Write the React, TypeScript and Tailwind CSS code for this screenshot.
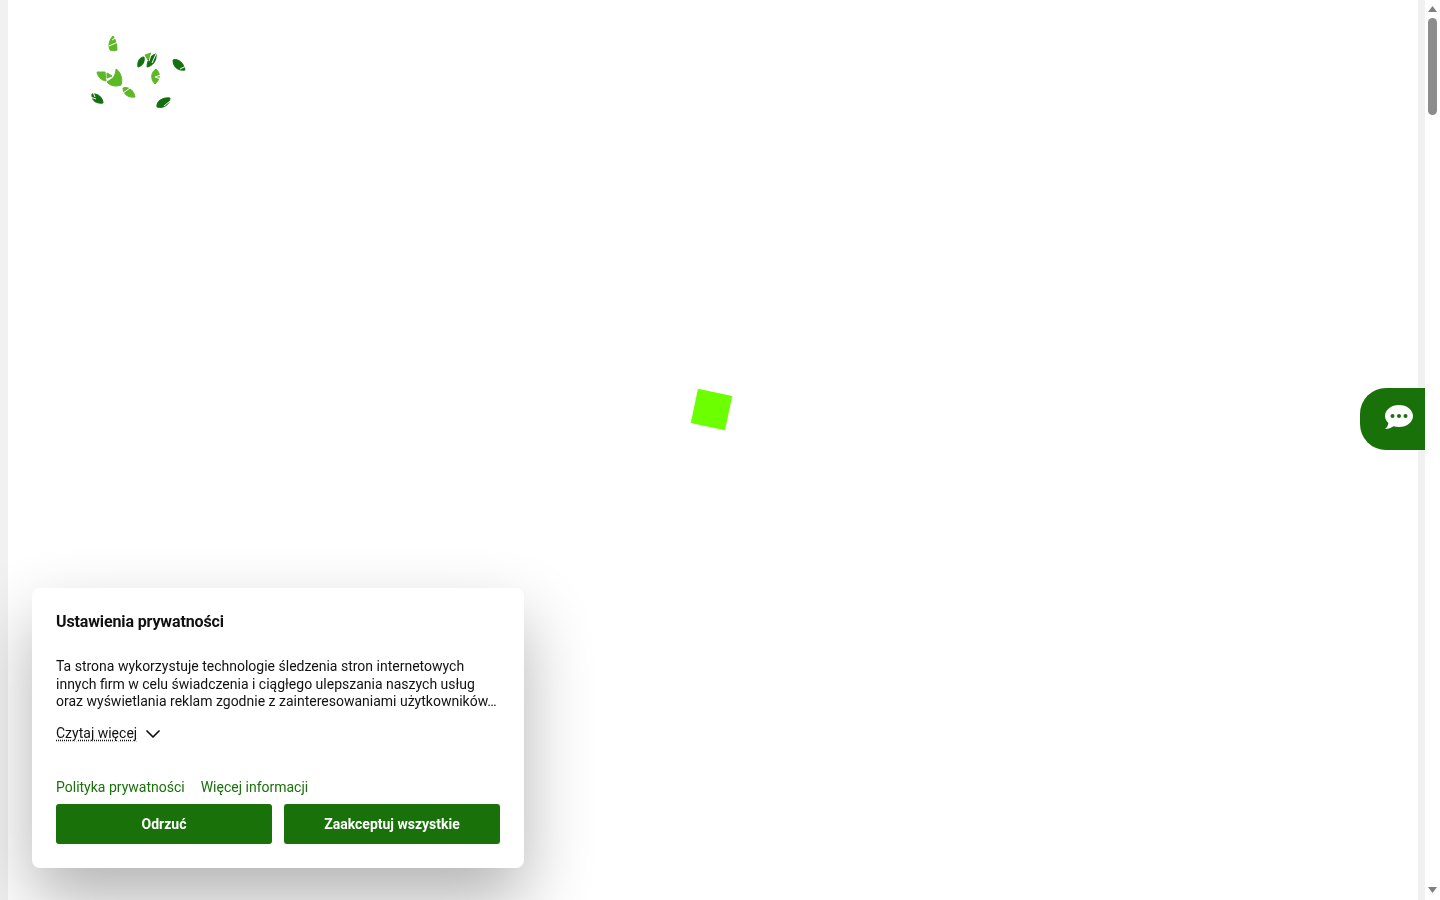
import { ChevronDown } from "lucide-react";

const LIGHT = "#5cb825";
const DARK = "#12700f";

function LeafLogo() {
  return (
    <svg width="115" height="90" viewBox="0 0 115 90" className="block">
      <g fill={LIGHT} stroke={LIGHT} strokeWidth="1" strokeLinejoin="round">
        {/* top leaf */}
        <path d="M33 11 C29 15 28 21 30 25 C33 26 36 26 37 25 C37 20 36 15 33 11 Z" />
        {/* middle leaf */}
        <path d="M76 44 C71 47 70 54 75 59 C80 55 81 48 76 44 Z" />
        {/* cluster */}
        <path d="M17 47 L25 47 L26 56 C21 55 18 52 17 47 Z" />
        <path d="M27 48 L32 51 L27 53 Z" />
        <path d="M36 44 C41 47 43 55 41 60 C36 62 30 61 27 57 L33 53 C35 50 36 47 36 44 Z" />
        {/* lower leaf */}
        <path d="M43 63 C49 61 54 66 55 72 C48 73 43 69 43 63 Z" />
        <path d="M65 30 L68 35 L71 28 Z" />
      </g>
      <g fill={DARK} stroke={DARK} strokeWidth="1" strokeLinejoin="round">
        {/* dark pair */}
        <path d="M58 42 C57 36 60 32 64 32 C65 36 63 41 58 42 Z" />
        <path d="M67 42 C67 35 71 30 76 29 C77 35 73 41 67 42 Z" />
        {/* right leaf */}
        <path d="M93 35 C99 33 104 39 105 45 C99 46 93 43 93 35 Z" />
        {/* bottom left leaf */}
        <path d="M12 69 C18 68 23 73 23 78 C17 79 11 76 12 69 Z" />
        {/* bottom right leaf */}
        <path d="M77 82 C76 76 83 72 90 73 C90 79 84 84 77 82 Z" />
      </g>
      <g stroke="#fff" strokeWidth="1" fill="none">
        <path d="M38 17 L29 21 M32 15 L37 12" />
        <path d="M72 27 L69 36 M76 29 L72 38" />
        <path d="M106 41 L100 44" />
        <path d="M81 50 L75 52 L81 54" />
        <path d="M43 68 L50 63" />
        <path d="M10 72 L16 74 M13 67 L15 72" />
        <path d="M84 81 L90 76" />
      </g>
    </svg>
  );
}

function ChatIcon() {
  return (
    <svg width="28" height="24" viewBox="0 0 28 24" className="block">
      <path
        d="M14 0 C21.700 0 28 4.900 28 11 C28 17.100 21.700 22 14 22 C12 22 10.200 21.700 8.500 21.200 C6.500 22.800 3.500 24 0 24 C2 22.500 3 20.500 3.400 18 C1.300 16 0 13.600 0 11 C0 4.900 6.300 0 14 0 Z"
        fill="#fff"
      />
      <circle cx="7.500" cy="11" r="2" fill="#19710a" />
      <circle cx="14" cy="11" r="2" fill="#19710a" />
      <circle cx="20.500" cy="11" r="2" fill="#19710a" />
    </svg>
  );
}

function Scrollbar() {
  return (
    <div className="w-[15px] shrink-0 h-full bg-white flex flex-col items-center justify-between pt-[6px] pb-[7px]">
      <div className="flex flex-col items-center gap-[6px]">
        <svg width="9" height="6" viewBox="0 0 9 6" className="block">
          <path d="M4.500 0 L9 6 L0 6 Z" fill="#7f7f7f" />
        </svg>
        <div className="w-[9px] h-[97px] rounded-full bg-[#8c8c8c]" />
      </div>
      <svg width="9" height="6" viewBox="0 0 9 6" className="block">
        <path d="M0 0 L9 0 L4.500 6 Z" fill="#7f7f7f" />
      </svg>
    </div>
  );
}

function CookieDialog() {
  return (
    <div className="fixed left-8 bottom-8 w-[492px] h-[280px] bg-white rounded-lg p-6 flex flex-col text-[14px] text-[#111] shadow-[0_32px_68px_rgba(0,0,0,0.3)]">
      <h2 className="text-[16px] leading-[20px] font-bold tracking-[-0.13px] text-[#111]">Ustawienia prywatności</h2>
      <p className="mt-[26px] leading-[17.500px] line-clamp-3">
        Ta strona wykorzystuje technologie śledzenia stron internetowych innych firm w celu świadczenia i ciągłego ulepszania naszych usług oraz wyświetlania reklam zgodnie z zainteresowaniami użytkowników. Wyrażenie zgody jest dobrowolne i może zostać w każdej chwili odwołane.
      </p>
      <div className="mt-[14px] flex items-center gap-1 leading-[17.500px]">
        <span className="underline decoration-dotted underline-offset-2">Czytaj więcej</span>
        <ChevronDown size={24} strokeWidth={1.75} className="-my-1 mt-[-3px]" />
      </div>
      <div className="mt-auto flex gap-4 leading-[17.500px] text-[#19710a] mb-2">
        <a>Polityka prywatności</a>
        <a>Więcej informacji</a>
      </div>
      <div className="flex gap-3">
        <button className="w-[216px] h-10 rounded-[3px] bg-[#19710a] text-white font-bold">Odrzuć</button>
        <button className="flex-1 h-10 rounded-[3px] bg-[#19710a] text-white font-bold">Zaakceptuj wszystkie</button>
      </div>
    </div>
  );
}

export default function App() {
  return (
    <div className="h-screen w-full overflow-hidden flex bg-white font-['Roboto',sans-serif]">
      <div className="w-2 shrink-0 bg-[#f1f1f1]" />
      <main className="flex-1 relative">
        <div className="pl-[72px] pt-[25px]">
          <LeafLogo />
        </div>
        {/* loader */}
        <div className="absolute left-[686px] top-[392px] w-[35px] h-[35px] rotate-[12deg] bg-[#6cff00]" />
      </main>
      <div className="w-[7px] shrink-0 bg-[#f1f1f1]" />
      <Scrollbar />

      <button className="fixed right-[15px] top-[388px] w-[65px] h-[62px] rounded-l-[26px] bg-[#19710a] flex items-center justify-end pr-[12px] pb-[4px]">
        <ChatIcon />
      </button>
      <CookieDialog />
    </div>
  );
}
